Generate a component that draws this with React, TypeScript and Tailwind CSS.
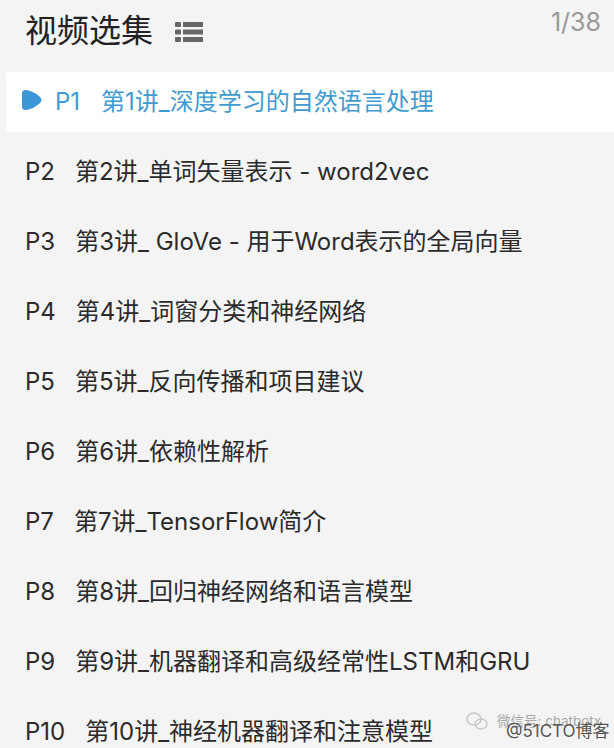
const rows: [string, string][] = [
  ["P2", "第2讲_单词矢量表示 - word2vec"],
  ["P3", "第3讲_ GloVe - 用于Word表示的全局向量"],
  ["P4", "第4讲_词窗分类和神经网络"],
  ["P5", "第5讲_反向传播和项目建议"],
  ["P6", "第6讲_依赖性解析"],
  ["P7", "第7讲_TensorFlow简介"],
  ["P8", "第8讲_回归神经网络和语言模型"],
  ["P9", "第9讲_机器翻译和高级经常性LSTM和GRU"],
  ["P10", "第10讲_神经机器翻译和注意模型"],
];

export default function App() {
  return (
    <div className="relative h-[748px] w-[614px] overflow-hidden bg-[#f4f4f4] font-['Inter','Noto_Sans_CJK_SC',sans-serif] text-[#2b2b2b]">
      <header className="flex h-[72px] items-start justify-between pl-[25px] pr-[13px]">
        <div className="flex items-center gap-[22px] pt-[10px]">
          <h1 className="text-[32px] font-normal leading-[42px] text-[#222222]">视频选集</h1>
          <svg width="28" height="22" viewBox="0 0 28 22" fill="#666666" className="mt-[1px]">
            <rect x="0" y="1" width="6" height="5" rx="1" />
            <rect x="0" y="8.5" width="6" height="5" rx="1" />
            <rect x="0" y="16" width="6" height="5" rx="1" />
            <rect x="8" y="1" width="20" height="5" />
            <rect x="8" y="8.5" width="20" height="5" />
            <rect x="8" y="16" width="20" height="5" />
          </svg>
        </div>
        <span className="pt-[7px] text-[25px] leading-[30px] text-[#999999]">1/38</span>
      </header>
      <div className="ml-[6px] flex h-[60px] items-center gap-[21px] rounded-l-[3px] bg-white pl-[16px] text-[24px] text-[#3f9bd0]">
        <span className="flex items-center gap-[13px]">
          <svg width="20" height="20" viewBox="0 0 20 20" fill="#3b96d8" className="-mt-[5px]">
            <path d="M0 3.5 Q0 0 3.5 0 Q10 0 17.5 6.5 Q21.5 10 17.5 13.5 Q10 20 3.5 20 Q0 20 0 16.5 Z" />
          </svg>
          <span>P1</span>
        </span>
        <span>第1讲_深度学习的自然语言处理</span>
      </div>
      <ul className="mt-[5px] pl-[25px]">
        {rows.map(([p, t]) => (
          <li key={p} className="flex h-[70px] items-center gap-[20px] text-[24px]">
            <span>{p}</span>
            <span>{t}</span>
          </li>
        ))}
      </ul>
      <div className="absolute left-[465px] top-[710px] flex items-center gap-[8px] whitespace-nowrap text-[13.5px] leading-[18px] text-[#a8a8a8]">
        <svg width="24" height="22" viewBox="0 0 24 22" fill="none" stroke="#c8c8c8" strokeWidth="1.5">
          <ellipse cx="9" cy="9" rx="7" ry="6" />
          <ellipse cx="16" cy="14" rx="6" ry="5" />
        </svg>
        <span>微信号: chatbotx</span>
      </div>
      <span className="absolute left-[506px] top-[719px] whitespace-nowrap text-[17px] leading-[24px] text-[#555555]">@51CTO博客</span>
    </div>
  );
}
